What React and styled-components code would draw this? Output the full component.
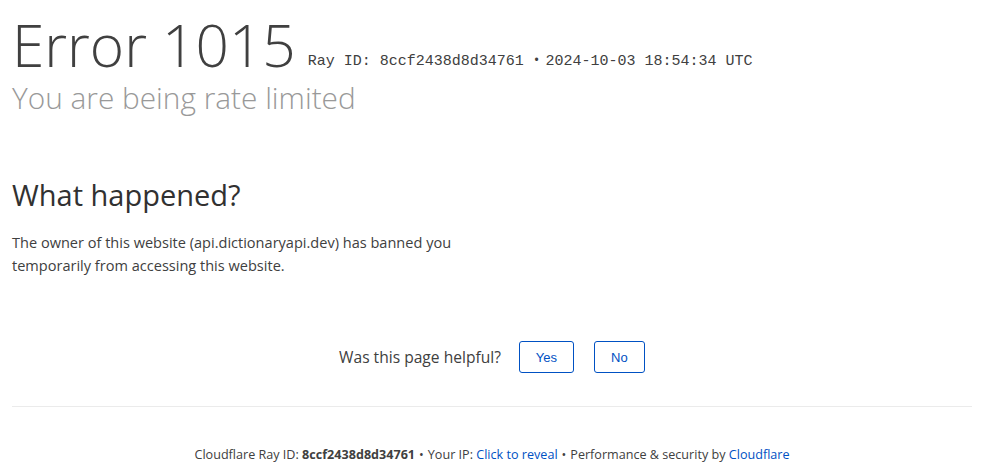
import { createGlobalStyle, styled } from "styled-components"

const Global = createGlobalStyle`
    html, body {
        margin: 0;
        padding: 0;
        background: #fff;
    }
    body {
        font-family: "Open Sans", "Noto Sans", sans-serif;
        color: #404040;
    }
`

const Page = styled.div`
    width: 984px;
    padding: 0 12px;
    box-sizing: border-box;
`
const Header = styled.header`
    padding-top: 12px;
`
const TitleRow = styled.div`
    display: flex;
    align-items: baseline;
    flex-wrap: wrap;
`
const Title = styled.h1`
    margin: 0 12px 0 0;
    font-size: 58.5px;
    font-weight: 300;
    line-height: 64px;
    color: #404040;
`
const RayInfo = styled.span`
    font-family: "Liberation Mono", "DejaVu Sans Mono", monospace;
    font-size: 15px;
    color: #404040;
    position: relative;
    top: -2px;
`
const Separator = styled.span`
    margin: 0 6px 0 1px;
    font-family: "Open Sans", sans-serif;
`
const Subtitle = styled.h2`
    margin: 3px 0 0;
    font-size: 29.8px;
    font-weight: 300;
    line-height: 38px;
    color: #999;
`
const Section = styled.section`
    margin-top: 59px;
    width: 470px;
`
const SectionTitle = styled.h2`
    margin: 0 0 17px;
    font-size: 29px;
    font-weight: 400;
    line-height: 38px;
    color: #313131;
`
const Text = styled.p`
    margin: 0;
    font-size: 14.55px;
    line-height: 22.5px;
    color: #404040;
`
const Feedback = styled.div`
    margin-top: 65px;
    display: flex;
    justify-content: center;
    align-items: center;
    gap: 20px;
`
const FeedbackLabel = styled.span`
    font-size: 15.6px;
    color: #404040;
    margin-right: -2px;
`
const Button = styled.button`
    box-sizing: border-box;
    width: ${p => p.$w}px;
    height: 32px;
    border: 1px solid #0051c3;
    border-radius: 3px;
    background: #fff;
    color: #0051c3;
    font-family: "Liberation Sans", Arial, sans-serif;
    font-size: 13px;
    padding: 0;
`
const Footer = styled.footer`
    margin-top: 33px;
    border-top: 1px solid #ebebeb;
    padding-top: 39px;
    text-align: center;
    font-size: 12.6px;
    color: #404040;
`
const Strong = styled.strong`
    font-weight: 700;
`
const Link = styled.a`
    color: #0051c3;
    text-decoration: none;
`
const Dot = styled.span`
    margin: 0 4px;
`

export default function App() {
    return (
        <Page>
            <Global />
            <Header>
                <TitleRow>
                    <Title>Error 1015</Title>
                    <RayInfo>
                        Ray ID: 8ccf2438d8d34761 <Separator>•</Separator>2024-10-03 18:54:34 UTC
                    </RayInfo>
                </TitleRow>
                <Subtitle>You are being rate limited</Subtitle>
            </Header>
            <Section>
                <SectionTitle>What happened?</SectionTitle>
                <Text>
                    The owner of this website (api.dictionaryapi.dev) has banned you temporarily from accessing this website.
                </Text>
            </Section>
            <Feedback>
                <FeedbackLabel>Was this page helpful?</FeedbackLabel>
                <Button $w={55}>Yes</Button>
                <Button $w={51}>No</Button>
            </Feedback>
            <Footer>
                Cloudflare Ray ID: <Strong>8ccf2438d8d34761</Strong>
                <Dot>•</Dot>Your IP: <Link href="#">Click to reveal</Link>
                <Dot>•</Dot>Performance &amp; security by <Link href="#">Cloudflare</Link>
            </Footer>
        </Page>
    )
}
